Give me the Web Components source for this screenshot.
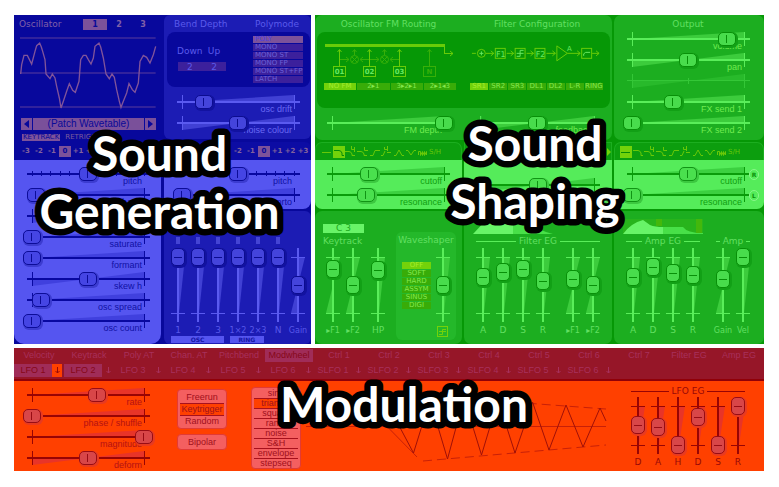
<!DOCTYPE html>
<html lang="en">
<head>
<meta charset="utf-8">
<title>Synth sections</title>
<style>
body { margin: 0; background: #fff; font-family: "DejaVu Sans", sans-serif; font-size: 9px; }
</style>
</head>
<body>
<synth-board></synth-board>
<script>
const BASE = `
  *, *::before { box-sizing: border-box; }
  :host { display: block; min-width: 0; }
  section { min-width: 0; }
  button, input { font: inherit; color: inherit; margin: 0; padding: 0; border: 0; background: none; min-width: 0; }
  svg { display: block; }
`;
function define(tag, render) {
  customElements.define(tag, class extends HTMLElement {
    constructor() { super(); this.attachShadow({ mode: 'open' }); }
    connectedCallback() {
      const t = document.createElement('template');
      t.innerHTML = render(this);
      this.shadowRoot.replaceChildren(t.content.cloneNode(true));
    }
  });
}
const attr = (el, n, d = '') => el.getAttribute(n) ?? d;

/* Horizontal fader: attributes label, value (0-100), bipolar, stepped, off, name (spoken only) */
define('h-fader', el => {
  const bi = el.hasAttribute('bipolar'), off = el.hasAttribute('off'), st = el.hasAttribute('stepped');
  const label = attr(el, 'label');
  const wedge = st ? '' : `<polygon fill="var(--wedge)" points="${bi ? '9,8 9,15 121,1 121,8' : '9,8 121,1 121,8'}"/>`;
  const steps = st ? [9, 18, 27, 37, 46, 74, 83, 93, 102, 111, 121].map(x => `<rect x="${x}" y="5" width="1" height="5" fill="var(--line)"/>`).join('') : '';
  return `<style>${BASE}
    :host { display: grid; height: 21px; grid-template: 1fr / minmax(0, 1fr); }
    svg, label, input { grid-area: 1 / 1; }
    svg { width: 100%; height: 21px; }
    label { justify-self: end; align-self: start; padding: 9px 11px 0 0; line-height: 12px; font-family: "Liberation Sans", sans-serif; font-size: 9px; color: var(--label); white-space: nowrap; }
    input { appearance: none; width: 100%; height: 16px; z-index: 1; }
    input::-webkit-slider-thumb { appearance: none; width: 18px; height: 14px; border: 1px solid var(--edge); border-radius: 5px; background: linear-gradient(90deg, transparent 7px, var(--edge) 7px, var(--edge) 8px, transparent 8px) 0 2px / 100% 8px no-repeat, var(--knob); box-shadow: 1px 1px 0 1px var(--shadow); }
    .off { opacity: .4; }
  </style>
  <svg class="${off ? 'off' : ''}" viewBox="0 0 130 21" preserveAspectRatio="none" aria-hidden="true">${wedge}
    <rect x="4" y="7" width="123" height="${off ? 1 : 2}" fill="var(--line)"/>${steps}
    ${st ? '' : '<rect x="9" y="1" width="1" height="14" fill="var(--line)"/><rect x="121" y="1" width="1" height="14" fill="var(--line)"/>'}
    ${off ? '<rect x="65" y="5" width="1" height="6" fill="var(--line)"/>' : ''}
  </svg>
  ${off ? '' : `${label ? `<label for="r">${label}</label>` : ''}<input id="r" type="range" ${label ? '' : `aria-label="${attr(el, 'name')}"`} value="${attr(el, 'value', '50')}">`}`;
});

/* Vertical fader: attributes label, value (0-100), bipolar, travel */
define('v-fader', el => {
  const h = +attr(el, 'travel', '56') + 18, e = h - 9;
  const bi = el.hasAttribute('bipolar'), label = attr(el, 'label');
  return `<style>${BASE}
    :host { display: grid; width: 20px; grid-template: ${h}px 14px / 20px; }
    svg, input { grid-area: 1 / 1; }
    input { appearance: none; writing-mode: vertical-lr; direction: rtl; width: 14px; height: ${h}px; justify-self: center; z-index: 1; }
    input::-webkit-slider-thumb { appearance: none; width: 14px; height: 18px; border: 1px solid var(--edge); border-radius: 5px; background: linear-gradient(180deg, transparent 8px, var(--edge) 8px, var(--edge) 9px, transparent 9px) 2px 0 / 8px 100% no-repeat, var(--knob); box-shadow: 1px 1px 0 1px var(--shadow); }
    label { grid-area: 2 / 1; justify-self: center; padding-top: 3px; line-height: 11px; font-size: 9px; color: var(--text); white-space: nowrap; }
    label.small { font-size: 8px; }
  </style>
  <svg width="20" height="${h}" viewBox="0 0 20 ${h}" aria-hidden="true">
    <polygon fill="var(--wedge)" points="${bi ? `10,9 17,9 10,${h / 2} 10,${e} 3,${e} 10,${h / 2}` : `10,9 17,9 11,${e} 10,${e}`}"/>
    <rect x="9" width="2" height="${h}" fill="var(--line)"/>
    <rect x="3" y="9" width="14" height="1" fill="var(--line)"/><rect x="3" y="${e}" width="14" height="1" fill="var(--line)"/>
  </svg>
  <input id="r" type="range" ${label ? '' : `aria-label="${attr(el, 'name')}"`} value="${attr(el, 'value', '50')}">${label ? `<label for="r" class="${label.length > 2 ? 'small' : ''}">${label}</label>` : ''}`;
});

/* Row or column of small choice buttons: attributes items (|), selected */
define('choice-list', el => {
  const sel = attr(el, 'selected', '-1');
  return `<style>${BASE}
    :host { display: grid; gap: 1px; grid-auto-rows: minmax(7px, auto); }
    :host([row]) { grid-auto-flow: column; grid-auto-columns: minmax(0, 1fr); }
    button { font-size: 7px; line-height: 7px; text-align: var(--align, center); padding: 0 var(--pad, 0px); color: var(--item); background: var(--itembg); white-space: nowrap; }
    button.on { background: var(--onbg); color: var(--on); }
  </style>${attr(el, 'items').split('|').map((t, i) => `<button type="button" class="${String(i) === sel ? 'on' : ''}">${t}</button>`).join('')}`;
});

/* Rounded stacked buttons */
define('soft-list', el => `<style>${BASE}
    :host { display: grid; border-radius: 4px; background: #f45f60; border: 1px solid #e23a35; padding: var(--sp, 1px) 0; }
    button { height: var(--rowh, 12px); font: 9px/9px "Liberation Sans", sans-serif; color: #a0101c; border-top: 1px solid #a8101c; margin: 0 2px; white-space: nowrap; }
    button:first-of-type { border-color: transparent; }
    button.on { background: #ff4000; }
  </style>${attr(el, 'items').split('|').map((t, i) => `<button type="button" class="${String(i) === attr(el, 'selected') ? 'on' : ''}">${t}</button>`).join('')}`);

/* Octave selector */
define('octave-row', () => `<style>${BASE}
    :host { display: flex; gap: 1px; height: 20px; align-items: center; padding: 0 6px; color: #83639c; }
    button { width: 12px; height: 11px; font: bold 7px/11px "DejaVu Sans", sans-serif; white-space: nowrap; display: flex; justify-content: center; }
    button.on { background: #7c529a; color: #0a0a98; }
  </style>${['-3', '-2', '-1', '0', '+1', '+2', '+3'].map(t => `<button type="button" class="${t === '0' ? 'on' : ''}">${t}</button>`).join('')}`);

/* Filter type strip */
const TYPES = ['M1 6.5H10', 'M1 4.5H6Q8 4.5 9 7V9.5H11', 'M0 5.5H4Q6 5.5 7 8V9.5H10M6.5 0V3.5H10M9.5 1V6', 'M0 5.5H4Q6 5.5 7 8V9.5H10M7.5 1V4.5H11',
  'M1 9.5H4L6 4.5H11', 'M0 9.5H2L4 5M3.5 1V3.5H7M6.5 0V5M6 6.5H10', 'M1 9.5H3L6 4L9 9.5H11', 'M1 4.5H3L6 9L9 4.5H11', 'M1.5 9V5.5H3.5V9.5L5.5 5.5V9.5L7.5 5.5V9.5L9.5 5.5V9'];
define('filter-types', el => `<style>${BASE}
    :host { display: flex; height: 18px; align-items: center; padding: 0 5px; color: #68c808; }
    button { width: 12px; height: 12px; flex: none; }
    button.on { background: #73d20a; color: #068c06; }
    .sh { font: 7px/12px "DejaVu Sans", sans-serif; }
  </style>${TYPES.map((d, i) => `<button type="button" aria-label="Filter type ${i}" class="${String(i) === attr(el, 'selected') ? 'on' : ''}"><svg width="12" height="12" fill="none" stroke="currentColor"><path d="${d}"/></svg></button>`).join('')}<button type="button" class="sh">S/H</button>`);

/* Heading between two rules */
define('ruled-title', () => `<style>${BASE}
    :host { display: flex; align-items: center; gap: 3px; height: 11px; line-height: 11px; font-size: 9px; color: var(--text); white-space: nowrap; }
    i { flex: 1; height: 1px; background: var(--line); }
  </style><i></i><slot></slot><i></i>`);

/* Large outlined caption over a region: attributes lines, y (baseline of first line), x */
define('big-caption', el => `<style>${BASE}
    :host { position: absolute; inset: 0; z-index: 5; pointer-events: none; }
    svg { width: 100%; height: 100%; overflow: visible; }
    text { font: 700 48px "Lato", sans-serif; text-anchor: middle; fill: #fff; stroke: #000; stroke-width: 13px; stroke-linejoin: round; paint-order: stroke; }
  </style><svg>${attr(el, 'lines').split('|').map((t, i) => `<text x="${attr(el, 'x')}" y="${+attr(el, 'y') + i * 58}">${t}</text>`).join('')}</svg>`);

define('sound-generation', () => `<style>${BASE}
    :host { position: relative; background: #08089c; display: grid; grid-template-columns: repeat(2, minmax(0, 1fr)); gap: 3px; color: #5a5aeb;
      --text: #5858ea; --line: #5a5af0; --wedge: #4040d4; --knob: #4444dc; --edge: #0c0c90; --shadow: #1212a0; --label: #6a6af4; }
    .light { background: #5555f0; --line: #0808a0; --wedge: #4040de; --knob: #4545e4; --edge: #0c0c98; --shadow: #3c3cd0; --label: #1010a4; padding: 6px 8px 0 9px; }
    .osc { display: flex; flex-direction: column; }
    .head { display: grid; grid-template-columns: 1fr 24px 24px 24px; padding: 4px 6px 0 5px; color: #8060a8; line-height: 11px; }
    .head button { font: bold 8px/11px "DejaVu Sans", sans-serif; }
    .head .on { background: #7c529a; color: #0a0a98; }
    .wave { width: 100%; height: 78px; margin-top: 3px; }
    .table { display: grid; grid-template-columns: 11px 1fr 11px; gap: 1px; margin: 7px 5px 0 7px; }
    .table button { background: #7a509a; color: #0a0a98; font: 10px/12px "Liberation Sans", sans-serif; height: 12px; display: grid; place-items: center; }
    .keys { display: flex; gap: 4px; padding: 4px 8px 0; font-size: 7px; color: #7c5c9c; }
    .keys button { line-height: 7px; padding: 0 1px; }
    .keys .on { background: #7c529a; color: #0a0a98; }
    .osc octave-row { margin-top: 1px; height: 18px; }
    .osc .light { flex: 1; border-radius: 0 0 10px 10px; padding-bottom: 10px; }
    .right { display: flex; flex-direction: column; }
    .panel { background: #1c1cb4; border-radius: 6px; }
    .titles { display: flex; justify-content: space-between; padding: 4px 12px 0 10px; line-height: 11px; height: 17px; }
    .bend { display: grid; grid-template-columns: 24px 24px 1fr; column-gap: 1px; background: #08089c; border-radius: 8px; margin: 0 1px 0 3px; height: 55px; padding: 4px 7px 4px 10px; }
    .bend .in { padding-top: 10px; display: grid; justify-items: center; align-content: start; gap: 5px; }
    .bend label { line-height: 11px; }
    .bend input { width: 24px; height: 9px; line-height: 9px; text-align: center; background: #3c209c; }
    .bend choice-list { justify-self: end; width: 50px; align-content: start; --align: left; --pad: 2px; --item: #6a60d8; --itembg: #3c209c; --onbg: #7c529a; --on: #5040e0; }
    .noise { padding: 7px 8px 3px 9px; }
    .oct { margin-top: 3px; border-radius: 6px 6px 0 0; background: #0c0ca4; }
    octave-row.end { justify-content: flex-end; height: 18px; padding-right: 2px; }
    .right .light { border-radius: 0 0 8px 8px; padding-bottom: 1px; }
    .mix { margin-top: 2px; flex: 1; padding: 26px 3px 0 4px; }
    .mutes, .faders { display: flex; }
    .mutes i { width: 4px; height: 7px; margin: 0 8px; background: #4444d4; }
    .faders { padding-top: 4px; }
    .tags { display: grid; grid-template-columns: 54fr 34fr 39fr; gap: 6px; padding-left: 3px; }
    .tags b { background: #5555f0; color: #1414a4; font-size: 6px; line-height: 7px; text-align: center; }
  </style>
  <section class="osc">
    <div class="head"><span>Oscillator</span><button type="button" class="on">1</button><button type="button">2</button><button type="button">3</button></div>
    <svg class="wave" viewBox="12 70 441 234" preserveAspectRatio="none" fill="none" stroke="#5a3c9c" stroke-width="3">
      <path d="M30 85H437M30 190H437M30 292H437"/>
      <path stroke="#80549a" stroke-width="4" d="M32 193L35 165L42 137L52 137L65 163L75 125L80 108L89 100L94 112L98 125L105 150L108 193L120 207L127 193L135 205L140 230L148 265L153 295L160 275L170 245L178 222L188 242L196 248L207 215L212 150L220 137L228 137L235 150L243 163L250 145L255 110L267 100L272 112L280 145L285 175L288 193L298 207L306 193L313 203L320 240L328 275L333 293L340 275L350 250L357 222L367 240L375 248L385 220L390 155L400 137L410 143L420 160L430 135L437 110"/>
    </svg>
    <div class="table"><button type="button" aria-label="Previous"><svg width="5" height="8"><path d="M5 0V8L0 4Z" fill="#08089c"/></svg></button><button type="button">(Patch Wavetable)</button><button type="button" aria-label="Next"><svg width="5" height="8"><path d="M0 0V8L5 4Z" fill="#08089c"/></svg></button></div>
    <div class="keys"><button type="button" class="on">KEYTRACK</button><button type="button">RETRIGGER</button></div>
    <octave-row></octave-row>
    <div class="light">
      <h-fader label="pitch" value="50" stepped></h-fader><h-fader label="shape" value="4"></h-fader><h-fader name="skew" value="50" bipolar></h-fader><h-fader label="saturate" value="0"></h-fader>
      <h-fader label="formant" value="0"></h-fader><h-fader label="skew h" value="50" bipolar></h-fader><h-fader label="osc spread" value="8"></h-fader><h-fader label="osc count" value="0"></h-fader>
    </div>
  </section>
  <section class="right">
    <div class="panel">
      <div class="titles"><span>Bend Depth</span><span>Polymode</span></div>
      <div class="bend">
        <div class="in"><label for="d">Down</label><input id="d" value="2"></div><div class="in"><label for="u">Up</label><input id="u" value="2"></div>
        <choice-list items="POLY|MONO|MONO ST|MONO FP|MONO ST+FP|LATCH" selected="0"></choice-list>
      </div>
      <div class="noise"><h-fader label="osc drift" value="20"></h-fader><h-fader label="noise colour" value="50" bipolar></h-fader></div>
    </div>
    <div class="oct"><octave-row class="end"></octave-row></div>
    <div class="light"><h-fader label="pitch" value="50" stepped></h-fader><h-fader label="porto" value="0"></h-fader></div>
    <div class="panel mix">
      <div class="mutes"><i></i><i></i><i></i><i></i><i></i><i></i></div>
      <div class="faders"><v-fader label="1" value="100"></v-fader><v-fader label="2" value="100"></v-fader><v-fader label="3" value="100"></v-fader><v-fader label="1×2" value="100"></v-fader><v-fader label="2×3" value="100"></v-fader><v-fader label="N" value="100"></v-fader><v-fader label="Gain" value="50" bipolar></v-fader></div>
      <div class="tags"><b>OSC</b><b>RING</b></div>
    </div>
  </section>
  <big-caption lines="Sound|Generation" x="49%" y="156"></big-caption>`);

const up = (x, c) => `<path stroke="${c}" d="M${x} 66V50M${x - 2} 52L${x} 49.5L${x + 2} 52"/>`;
const arrow = (a, b, y) => { const s = b > a ? -3 : 3; return `<path d="M${a} ${y}H${b}M${b + s} ${y - 2.5}L${b} ${y}L${b + s} ${y + 2.5}"/>`; };
define('fm-routing', () => `<style>${BASE} svg { width: 100%; height: 50px; } text { font: bold 7px "DejaVu Sans", sans-serif; text-anchor: middle; }</style>
  <svg viewBox="317 32 147 50" preserveAspectRatio="xMinYMin" fill="none" stroke="#68cc08">
    <path stroke-width="3" d="M325 45.5H445"/><path d="M444.5 46V53.5"/>${arrow(444, 453, 53.5)}
    ${up(339.5, '#68cc08')}${up(369.5, '#68cc08')}${up(399.5, '#68cc08')}${up(429.5, '#38b008')}
    <g stroke="#38b008"><path d="M354.5 55V50M352.5 52L354.5 49.5L356.5 52M384.5 55V50M382.5 52L384.5 49.5L386.5 52"/>
    ${arrow(340, 349, 59.5)}${arrow(369, 360, 59.5)}${arrow(370, 379, 59.5)}${arrow(399, 390, 59.5)}
    <circle cx="354.5" cy="59.5" r="4"/><circle cx="384.5" cy="59.5" r="4"/><path d="M352 57L357 62M357 57L352 62M382 57L387 62M387 57L382 62"/><rect x="423.5" y="66.5" width="12" height="10"/></g>
    <rect x="333.5" y="66.5" width="12" height="10"/><rect x="363.5" y="66.5" width="12" height="10"/><rect x="393.5" y="66.5" width="12" height="10"/>
    <g stroke="none" fill="#68e860"><text x="339.5" y="74">01</text><text x="369.5" y="74">02</text><text x="399.5" y="74">03</text><text x="429.5" y="74" fill="#38b008">N</text></g>
  </svg>`);
define('filter-routing', () => `<style>${BASE} svg { width: 100%; height: 50px; } text { font: 8px "DejaVu Sans", sans-serif; text-anchor: middle; } .amp { font-size: 7px; }</style>
  <svg viewBox="464 32 147 50" preserveAspectRatio="xMinYMin" fill="none" stroke="#68cc08">
    <path d="M472 53.5H476"/><circle cx="481.5" cy="53.5" r="4"/><path d="M479.5 53.5H483.5M481.5 51.5V55.5" stroke="#68e860"/>
    ${arrow(486, 494, 53.5)}${arrow(507, 514, 53.5)}${arrow(527, 534, 53.5)}${arrow(547, 556, 53.5)}${arrow(568, 581, 53.5)}${arrow(593, 600, 53.5)}
    <rect x="495.5" y="48.5" width="10" height="10"/><rect x="515.5" y="48.5" width="10" height="10"/><rect x="535.5" y="48.5" width="10" height="10"/><rect x="582.5" y="48.5" width="10" height="10"/>
    <path d="M557.5 46V61L568 53.5Z"/><path stroke="#68e860" d="M517 56.5H520.5V50.5H524M517 53.5H524M584.5 56V54L586.5 52.5H591"/>
    <g stroke="none" fill="#68e860"><text x="501" y="57">F1</text><text x="541" y="57">F2</text><text x="570" y="51" class="amp">A</text></g>
  </svg>`);
define('sound-shaping', () => `<style>${BASE}
    :host { position: relative; background: #069806; display: grid; grid-template-columns: minmax(0, 147fr) minmax(0, 148fr) minmax(0, 150fr); gap: 2px; grid-template-rows: auto auto 1fr;
      --text: #62e062; --line: #5aee5a; --wedge: #3ccc3c; --knob: #48dc4c; --edge: #089008; --shadow: #12a016; --label: #70ec50; }
    .panel { background: #1cae20; border-radius: 7px; }
    .c1 { padding-left: 8px; padding-right: 9px; } .c2 { padding-left: 9px; padding-right: 9px; } .c3 { padding-left: 9px; padding-right: 11px; }
    .routing { grid-column: span 2; display: grid; grid-template: 17px 76px auto / minmax(0, 147fr) minmax(0, 150fr); padding-bottom: 4px; }
    .t { line-height: 11px; padding-top: 4px; text-align: center; color: var(--text); }
    .box { grid-column: span 2; background: #069806; border-radius: 8px; margin: 0 2px; display: grid; grid-template: 50px auto / minmax(0, 147fr) minmax(0, 146fr); align-items: start; }
    .box choice-list { --item: #84e850; --itembg: #38ac08; --onbg: #73d20a; --on: #a4ec30; margin: 1px 8px 0 7px; }
    .box .flt { margin: 1px 7px 0 6px; }
    .routing h-fader { margin-top: 7px; }
    .out { padding-bottom: 3px; }
    .out .t { padding-bottom: 1px; }
    .strip { background: #0c9e0e; border-radius: 7px 7px 0 0; border: 1px solid #1cae20; border-width: 1px 1px 0; height: 18px; }
    .strip filter-types { height: 17px; }
    .pan { display: flex; justify-content: space-between; align-items: center; border-radius: 0; }
    .light { background: #55ec5a; border-radius: 0 0 7px 7px; padding-top: 6px; padding-bottom: 1px; height: 49px; --line: #0a9c0a; --wedge: #3cd040; --knob: #4ae04e; --edge: #109414; --shadow: #3cc840; --label: #10a010; position: relative; }
    .rl { position: absolute; right: 5px; top: 9px; display: grid; gap: 10px; }
    .rl button { width: 10px; height: 11px; border-radius: 5px; background: #55ec5a; border: 1px solid #88f888; font: bold 6px/9px "DejaVu Sans", sans-serif; color: #0a900a; }
    .c2 .bal { margin-top: 11px; }
    .low { display: flex; color: var(--text); min-height: 133px; }
    .faders { display: flex; padding-top: 1px; }
    .kt { padding: 13px 0 0 8px; width: 81px; }
    .kt .note { display: block; width: 41px; height: 9px; background: #68f468; color: #1ca81c; font-size: 9px; line-height: 9px; }
    .kt .n { line-height: 11px; padding: 3px 0 0; }
    .kt v-fader:last-child { margin-left: 5px; }
    .ws { flex: 1; margin: 21px 6px 4px 0; background: #24b82a; border-radius: 6px; display: grid; grid-template: 15px 1fr / 37px 1fr; }
    .ws .n { grid-column: span 2; line-height: 11px; padding-top: 3px; text-align: center; }
    .ws choice-list { align-content: start; margin: 15px 2px 0 6px; --item: #84e850; --itembg: #38ac08; --onbg: #73d20a; --on: #a4ec30; }
    .ws .s { display: grid; align-content: start; padding-top: 1px; }
    .ws .s button { width: 11px; height: 11px; margin: -10px 0 0 4px; }
    .eg { display: grid; grid-template-columns: 80px 50px; column-gap: 0; grid-template-rows: 14px 11px auto; row-gap: 3px; padding-top: 8px; align-content: start; }
    .eg .g { grid-column: span 2; width: 80px; height: 15px; }
    .eg .wide { grid-column: span 2; }
    .eg ruled-title { margin: 0 3px; }
    .eg .faders { padding: 0; margin-top: -2px; }
    .eg .two { justify-content: flex-end; }
    .c3.eg { grid-template-columns: 80px 40px; column-gap: 10px; }
  </style>
  <section class="panel routing">
    <div class="t">Oscillator FM Routing</div><div class="t">Filter Configuration</div>
    <div class="box"><fm-routing></fm-routing><filter-routing></filter-routing>
      <choice-list row items="NO FM|2▸1|3▸2▸1|2▸1◂3" selected="0"></choice-list><choice-list class="flt" row items="SR1|SR2|SR3|DL1|DL2|L-R|RING" selected="0"></choice-list></div>
    <div class="c1"><h-fader label="FM depth" value="100"></h-fader></div><div class="c2"><h-fader label="feedback" value="50" bipolar></h-fader></div>
  </section>
  <section class="panel out c3"><div class="t">Output</div>
    <h-fader label="volume" value="85"></h-fader><h-fader label="pan" value="50" bipolar></h-fader><h-fader off bipolar></h-fader><h-fader label="FX send 1" value="37"></h-fader><h-fader label="FX send 2" value="0"></h-fader></section>
  <section><div class="strip"><filter-types selected="1"></filter-types></div><div class="light c1"><h-fader label="cutoff" value="33"></h-fader><h-fader label="resonance" value="30"></h-fader></div></section>
  <section><div class="strip pan"><svg width="4" height="8"><path d="M4 0V8L0 4Z" fill="#73d20a"/></svg><svg width="4" height="8"><path d="M0 0V8L4 4Z" fill="#73d20a"/></svg></div><div class="light c2"><h-fader class="bal" name="balance" value="50" bipolar></h-fader></div></section>
  <section><div class="strip"><filter-types selected="0"></filter-types></div><div class="light c3"><h-fader label="cutoff" value="50"></h-fader><h-fader label="resonance" value="0"></h-fader><div class="rl"><button type="button">R</button><button type="button">L</button></div></div></section>
  <section class="panel low">
    <div class="kt"><button type="button" class="note">C 3</button><div class="n">Keytrack</div>
      <div class="faders"><v-fader label="▸F1" value="78" bipolar></v-fader><v-fader label="▸F2" value="50" bipolar></v-fader><v-fader label="HP" value="77"></v-fader></div></div>
    <div class="ws"><div class="n">Waveshaper</div><choice-list items="OFF|SOFT|HARD|ASSYM|SINUS|DIGI" selected="0"></choice-list>
      <div class="s"><v-fader name="Waveshaper drive" value="50"></v-fader><button type="button" aria-label="Waveshaper curve"><svg width="11" height="11" fill="none" stroke="#73d20a"><rect x=".5" y=".5" width="10" height="10"/><path d="M2 8.5H5.5V3.5H9M2 5.5H9"/></svg></button></div></div>
  </section>
  <section class="panel low eg c2">
    <svg class="g" viewBox="0 0 80 15"><path d="M0 15L14 0H40V15Z" fill="#68f468"/><path d="M40 15V4H60Q66 12 80 15Z" fill="#48e048"/><path d="M16 0h5v3h-5z" fill="#38ac08"/></svg>
    <ruled-title class="wide">Filter EG</ruled-title>
    <div class="faders"><v-fader label="A" value="65"></v-fader><v-fader label="D" value="74"></v-fader><v-fader label="S" value="79"></v-fader><v-fader label="R" value="57"></v-fader></div>
    <div class="faders two"><v-fader label="▸F1" value="61" bipolar></v-fader><v-fader label="▸F2" value="50" bipolar></v-fader></div>
  </section>
  <section class="panel low eg c3">
    <svg class="g" viewBox="0 0 80 15"><path fill="#28b41c" d="M0 0h80v15H0z"/><path d="M0 15Q8 4 20 1L27 6Q32 8 40 8V15Z" fill="#68f468"/><path d="M40 15V8H60Q64 14 80 14V15Z" fill="#48e048"/><path d="M33 0h6v7h-6zM73 0h6v14h-6z" fill="#44b80c"/></svg>
    <ruled-title>Amp EG</ruled-title><ruled-title>Amp</ruled-title>
    <div class="faders"><v-fader label="A" value="64"></v-fader><v-fader label="D" value="82"></v-fader><v-fader label="S" value="72"></v-fader><v-fader label="R" value="68"></v-fader></div>
    <div class="faders"><v-fader label="Gain" value="61" bipolar></v-fader><v-fader label="Vel" value="100"></v-fader></div>
  </section>
  <big-caption lines="Sound|Shaping" x="49%" y="146"></big-caption>`);

const ROW1 = ['Velocity', 'Keytrack', 'Poly AT', 'Chan. AT', 'Pitchbend', 'Modwheel', 'Ctrl 1', 'Ctrl 2', 'Ctrl 3', 'Ctrl 4', 'Ctrl 5', 'Ctrl 6', 'Ctrl 7', 'Filter EG', 'Amp EG'];
const ROW2 = ['LFO 1', 'LFO 2', 'LFO 3', 'LFO 4', 'LFO 5', 'LFO 6', 'SLFO 1', 'SLFO 2', 'SLFO 3', 'SLFO 4', 'SLFO 5', 'SLFO 6'];
define('modulation-area', () => `<style>${BASE}
    :host { position: relative; background: #ff4000; --text: #980808; --line: #980404; --wedge: #e83428; --knob: #d84648; --edge: #980c14; --shadow: #e83a20; --label: #b41014; }
    .src { background: #961628; border-bottom: 2px solid #900008; display: grid; grid-template-columns: repeat(15, minmax(0, 1fr)); grid-template-rows: 15px 15px; padding: 1px 0 0; color: #a8305c; font: 9px/13px "Liberation Sans", sans-serif; }
    .src button { height: 13px; white-space: nowrap; }
    .a { margin: 0 1px; }
    .a.on, .b.on button:first-child { background: #a02c58; color: #860818; }
    .b { display: grid; grid-template-columns: 38fr 12fr; }
    .b svg { margin: 0 auto; }
    .b .hot { background: #ff4000; color: #980808; margin-right: 2px; }
    .body { display: flex; padding: 6px 16px 0 9px; }
    .left { display: grid; grid-template-columns: 130px 50px 50px; column-gap: 24px; align-items: start; }
    .btns { display: grid; gap: 5px; padding-top: 2px; }
    .shapes { --rowh: 10px; --sp: 0px; }
    .graph { flex: 1; height: 81px; min-width: 0; }
    .eg ruled-title { margin: -1px 3px 0; }
    .eg .faders { display: flex; height: 71px; }
  </style>
  <nav class="src">${ROW1.map(t => `<button type="button" class="a ${t === 'Modwheel' ? 'on' : ''}">${t}</button>`).join('')}${ROW2.map((t, i) => `<div class="b ${i < 2 ? 'on' : ''}"><button type="button">${t}</button><button type="button" aria-label="Select ${t}" class="${i ? '' : 'hot'}"><svg width="5" height="7" fill="none" stroke="currentColor"><path d="M2.5 0V6M.5 4L2.5 6L4.5 4"/></svg></button></div>`).join('')}</nav>
  <div class="body">
    <div class="left">
      <div><h-fader label="rate" value="58"></h-fader><h-fader label="phase / shuffle" value="0"></h-fader><h-fader label="magnitude" value="100"></h-fader><h-fader label="deform" value="50" bipolar></h-fader></div>
      <div class="btns"><soft-list items="Freerun|Keytrigger|Random" selected="1"></soft-list><soft-list items="Bipolar"></soft-list></div>
      <soft-list class="shapes" items="sine|triangle|square|ramp|noise|S&amp;H|envelope|stepseq" selected="1"></soft-list>
    </div>
    <svg class="graph" viewBox="301 387 327 81" preserveAspectRatio="none" fill="none" stroke="#a01008">
      <path stroke="#c82008" d="M306 426.5H606M366 405L417 457"/>
      <path stroke="#c82008" stroke-dasharray="9 5" d="M423 461L606 445M430 396L606 409"/>
      <path d="M380 426L396 420L413.5 453L430 400L447.5 459L464 398L481.5 455L498 400L515 453L532.5 402L549 450L566 405L583 447L600 408L606 421"/>
    </svg>
    <div class="eg"><ruled-title>LFO EG</ruled-title>
      <div class="faders"><v-fader travel="39" label="D" value="51"></v-fader><v-fader travel="39" label="A" value="46"></v-fader><v-fader travel="39" label="H" value="0"></v-fader><v-fader travel="39" label="D" value="72"></v-fader><v-fader travel="39" label="S" value="0"></v-fader><v-fader travel="39" label="R" value="100"></v-fader></div></div>
  </div>
  <big-caption lines="Modulation" x="52%" y="74"></big-caption>`);

define('synth-board', () => `<style>${BASE}
    :host { display: grid; grid-template-columns: minmax(0, 297fr) minmax(0, 449fr); gap: 4px; padding: 15px 15px 16px 14px; }
    modulation-area { grid-column: span 2; }
  </style><sound-generation></sound-generation><sound-shaping></sound-shaping><modulation-area></modulation-area>`);
</script>
</body>
</html>
